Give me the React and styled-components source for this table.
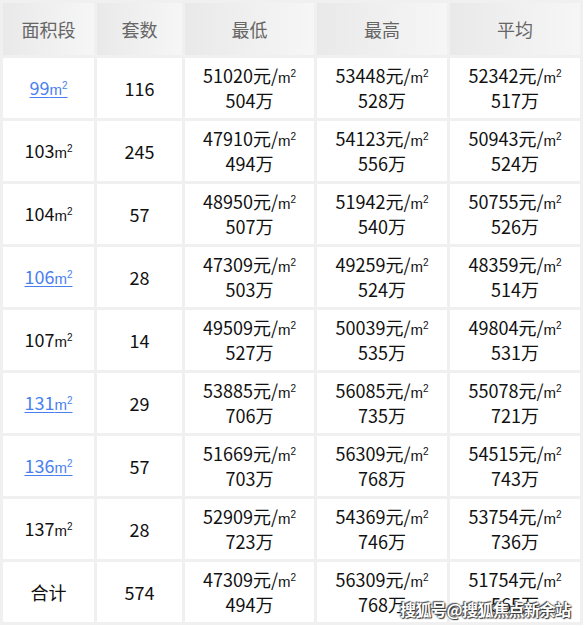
import React from 'react';
import styled, { createGlobalStyle } from 'styled-components';

const GlobalStyle = createGlobalStyle`
  body {
    margin: 0;
    background: #ffffff;
    font-family: "Noto Sans CJK SC", "Noto Sans", sans-serif;
  }
`;

const rows = [
  { area: '99', link: true, count: 116, min: ['51020', '504'], max: ['53448', '528'], avg: ['52342', '517'] },
  { area: '103', count: 245, min: ['47910', '494'], max: ['54123', '556'], avg: ['50943', '524'] },
  { area: '104', count: 57, min: ['48950', '507'], max: ['51942', '540'], avg: ['50755', '526'] },
  { area: '106', link: true, count: 28, min: ['47309', '503'], max: ['49259', '524'], avg: ['48359', '514'] },
  { area: '107', count: 14, min: ['49509', '527'], max: ['50039', '535'], avg: ['49804', '531'] },
  { area: '131', link: true, count: 29, min: ['53885', '706'], max: ['56085', '735'], avg: ['55078', '721'] },
  { area: '136', link: true, count: 57, min: ['51669', '703'], max: ['56309', '768'], avg: ['54515', '743'] },
  { area: '137', count: 28, min: ['52909', '723'], max: ['54369', '746'], avg: ['53754', '736'] }
];

const total = { count: 574, min: ['47309', '494'], max: ['56309', '768'], avg: ['51754', '565'] };

const Wrap = styled.div`
  position: relative;
  width: 585px;
`;

const Table = styled.table`
  border-collapse: separate;
  border-spacing: 3px;
  background: #f0f0f0;
  width: 583px;
  table-layout: fixed;
`;

const HeadCell = styled.th`
  height: 52px;
  padding: 0;
  font-weight: normal;
  font-size: 18px;
  color: #666666;
  background: linear-gradient(to right, #e9e9e9, #f6f6f6);
  text-align: center;
`;

const Cell = styled.td`
  height: 60px;
  padding: 0;
  background: #ffffff;
  color: #111111;
  font-size: 18px;
  line-height: 23px;
  text-align: center;
`;

const AreaLink = styled.a`
  color: #4a7ff0;
  text-decoration: underline;
  text-underline-offset: 2px;
`;

const Unit = styled.span`
  font-family: "Liberation Sans", sans-serif;
  font-size: 15px;

  sup {
    font-size: 10px;
    vertical-align: 6px;
    line-height: 0;
  }
`;

const Watermark = styled.div`
  position: absolute;
  left: 400px;
  top: 597px;
  font-size: 16px;
  font-weight: bold;
  color: #ffffff;
  letter-spacing: -0.5px;
  text-shadow: 0 0 2px #333, 1px 1px 1px #333, -1px -1px 1px #555;
`;

const M2 = () => (
  <Unit>m<sup>2</sup></Unit>
);

const Price = ({ value }) => (
  <>
    <div>{value[0]}元/<M2 /></div>
    <div>{value[1]}万</div>
  </>
);

function App() {
  return (
    <Wrap>
      <GlobalStyle />
      <Table>
        <colgroup>
          <col style={{ width: 91 }} />
          <col style={{ width: 85 }} />
          <col style={{ width: 129 }} />
          <col style={{ width: 130 }} />
          <col style={{ width: 130 }} />
        </colgroup>
        <thead>
          <tr>
            <HeadCell>面积段</HeadCell>
            <HeadCell>套数</HeadCell>
            <HeadCell>最低</HeadCell>
            <HeadCell>最高</HeadCell>
            <HeadCell>平均</HeadCell>
          </tr>
        </thead>
        <tbody>
          {rows.map((r) => (
            <tr key={r.area}>
              <Cell>
                {r.link
                  ? <AreaLink href="#">{r.area}<M2 /></AreaLink>
                  : <>{r.area}<M2 /></>}
              </Cell>
              <Cell>{r.count}</Cell>
              <Cell><Price value={r.min} /></Cell>
              <Cell><Price value={r.max} /></Cell>
              <Cell><Price value={r.avg} /></Cell>
            </tr>
          ))}
          <tr>
            <Cell>合计</Cell>
            <Cell>{total.count}</Cell>
            <Cell><Price value={total.min} /></Cell>
            <Cell><Price value={total.max} /></Cell>
            <Cell><Price value={total.avg} /></Cell>
          </tr>
        </tbody>
      </Table>
      <Watermark>搜狐号@搜狐焦点新余站</Watermark>
    </Wrap>
  );
}

export default App;
